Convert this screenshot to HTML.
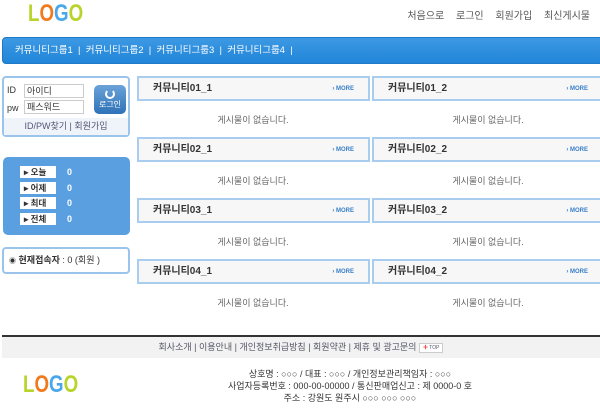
<!DOCTYPE html>
<html><head><meta charset="utf-8"><style>
*{margin:0;padding:0;box-sizing:border-box}
body{width:600px;height:409px;background:#fff;font-family:"Liberation Sans","Noto Sans CJK KR",sans-serif;font-size:9px;color:#555;position:relative;overflow:hidden}
.a{position:absolute}
.logo{font-family:"Liberation Sans",sans-serif;font-weight:bold;font-size:24px;letter-spacing:0px;line-height:1;transform:scaleX(.78);transform-origin:left}
.logo span:nth-child(1){color:#b8d42a}.logo span:nth-child(2){color:#f07a1e}.logo span:nth-child(3){color:#4aa8ea}.logo span:nth-child(4){color:#b8d42a}
.top{right:10px;top:7px;font-size:10px;color:#555;word-spacing:2px}
.top b{font-weight:normal;margin-left:7px}
.nav{left:2px;top:37px;width:600px;height:27px;background:linear-gradient(#3d99e3,#2185d8);border:1px solid #1f78c8;border-radius:4px 0 0 4px;color:#fff;font-size:9.5px;line-height:25px;padding-left:12px}
.box{border:2px solid #9ac4ec;border-radius:4px;background:#fff}
.bh{height:25px;border:2px solid #a8cdef;background:#f7f7f7;font-weight:bold;font-size:10px;color:#333;line-height:21px;padding-left:14px}
.more{position:absolute;right:14px;top:8px;font-size:6px;line-height:6px;color:#3a7fc8;font-weight:bold}
.msg{width:232px;text-align:center;font-size:9px;color:#666}
.stat{left:3px;top:157px;width:127px;height:78px;background:#5a9fe0;border-radius:5px}
.lbl{position:absolute;left:17px;width:36px;height:12px;background:#fff;font-size:8.5px;font-weight:bold;color:#333;line-height:12px;padding-left:4px}
.val{position:absolute;left:64px;color:#fff;font-weight:bold;font-size:9px}
</style></head><body>
<div class="a logo" style="left:28px;top:2px"><span>L</span><span>O</span><span>G</span><span>O</span></div>
<div class="a top">처음으로 <b>로그인</b> <b>회원가입</b> <b>최신게시물</b></div>
<div class="a nav">커뮤니티그룹1 &nbsp;|&nbsp; 커뮤니티그룹2 &nbsp;|&nbsp; 커뮤니티그룹3 &nbsp;|&nbsp; 커뮤니티그룹4 &nbsp;|</div>

<div class="a box" style="left:2px;top:76px;width:128px;height:61px;">
<div class="a" style="left:3px;top:7px;font-size:9px;color:#333">ID</div>
<div class="a" style="left:20px;top:6px;width:60px;height:14px;border:1px solid #ccc;font-size:9px;color:#333;padding-left:2px;line-height:12px">아이디</div>
<div class="a" style="left:3px;top:25px;font-size:9px;color:#333">pw</div>
<div class="a" style="left:20px;top:22px;width:60px;height:14px;border:1px solid #ccc;font-size:9px;color:#333;padding-left:2px;line-height:12px">패스워드</div>
<div class="a" style="left:90px;top:7px;width:32px;height:29px;background:linear-gradient(#6aa3d8,#2f72b8);border-radius:5px;color:#fff;font-size:8px;text-align:center;padding-top:15px;line-height:10px">로그인<div class="a" style="left:11px;top:4px;width:10px;height:10px;border:2px solid #fff;border-top-color:transparent;border-radius:50%"></div></div>
<div class="a" style="left:0;top:40px;width:124px;height:17px;background:#eef4fa;text-align:center;line-height:17px;color:#557;font-size:9px">ID/PW찾기 | 회원가입</div>
</div>

<div class="a stat">
<div class="lbl" style="top:9px">▸ 오늘</div><div class="val" style="top:10px">0</div>
<div class="lbl" style="top:25px">▸ 어제</div><div class="val" style="top:26px">0</div>
<div class="lbl" style="top:40px">▸ 최대</div><div class="val" style="top:41px">0</div>
<div class="lbl" style="top:56px">▸ 전체</div><div class="val" style="top:57px">0</div>
</div>
<div class="a box" style="left:2px;top:247px;width:128px;height:27px;line-height:23px;padding-left:5px;font-size:9px;color:#333"><span style="font-size:7px">◉</span> <b>현재접속자</b> : 0 (회원 )</div>

<div class="a bh" style="left:137px;top:76px;width:233px">커뮤니티01_1<span class="more">› MORE</span></div>
<div class="a bh" style="left:372px;top:76px;width:232px">커뮤니티01_2<span class="more">› MORE</span></div>
<div class="a msg" style="left:137px;top:113px">게시물이 없습니다.</div><div class="a msg" style="left:372px;top:113px">게시물이 없습니다.</div>
<div class="a bh" style="left:137px;top:137px;width:233px">커뮤니티02_1<span class="more">› MORE</span></div>
<div class="a bh" style="left:372px;top:137px;width:232px">커뮤니티02_2<span class="more">› MORE</span></div>
<div class="a msg" style="left:137px;top:174px">게시물이 없습니다.</div><div class="a msg" style="left:372px;top:174px">게시물이 없습니다.</div>
<div class="a bh" style="left:137px;top:198px;width:233px">커뮤니티03_1<span class="more">› MORE</span></div>
<div class="a bh" style="left:372px;top:198px;width:232px">커뮤니티03_2<span class="more">› MORE</span></div>
<div class="a msg" style="left:137px;top:235px">게시물이 없습니다.</div><div class="a msg" style="left:372px;top:235px">게시물이 없습니다.</div>
<div class="a bh" style="left:137px;top:259px;width:233px">커뮤니티04_1<span class="more">› MORE</span></div>
<div class="a bh" style="left:372px;top:259px;width:232px">커뮤니티04_2<span class="more">› MORE</span></div>
<div class="a msg" style="left:137px;top:296px">게시물이 없습니다.</div><div class="a msg" style="left:372px;top:296px">게시물이 없습니다.</div>

<div class="a" style="left:2px;top:335px;width:598px;height:2px;background:#333"></div>
<div class="a" style="left:2px;top:337px;width:598px;height:21px;background:#f2f2f2;text-align:center;line-height:20px;font-size:9px;color:#556">회사소개 | 이용안내 | 개인정보취급방침 | 회원약관 | 제휴 및 광고문의 <span style="display:inline-block;border:1px solid #ccc;background:#fff;font-size:5px;line-height:8px;padding:0 3px;vertical-align:middle"><span style="color:#e55">✚</span> TOP</span></div>
<div class="a logo" style="left:23px;top:373px"><span>L</span><span>O</span><span>G</span><span>O</span></div>
<div class="a" style="left:200px;top:368px;width:300px;text-align:center;font-size:9px;line-height:12px;color:#333">상호명 : ○○○ / 대표 : ○○○ / 개인정보관리책임자 : ○○○<br>사업자등록번호 : 000-00-00000 / 통신판매업신고 : 제 0000-0 호<br>주소 : 강원도 원주시 ○○○ ○○○ ○○○</div>
</body></html>
